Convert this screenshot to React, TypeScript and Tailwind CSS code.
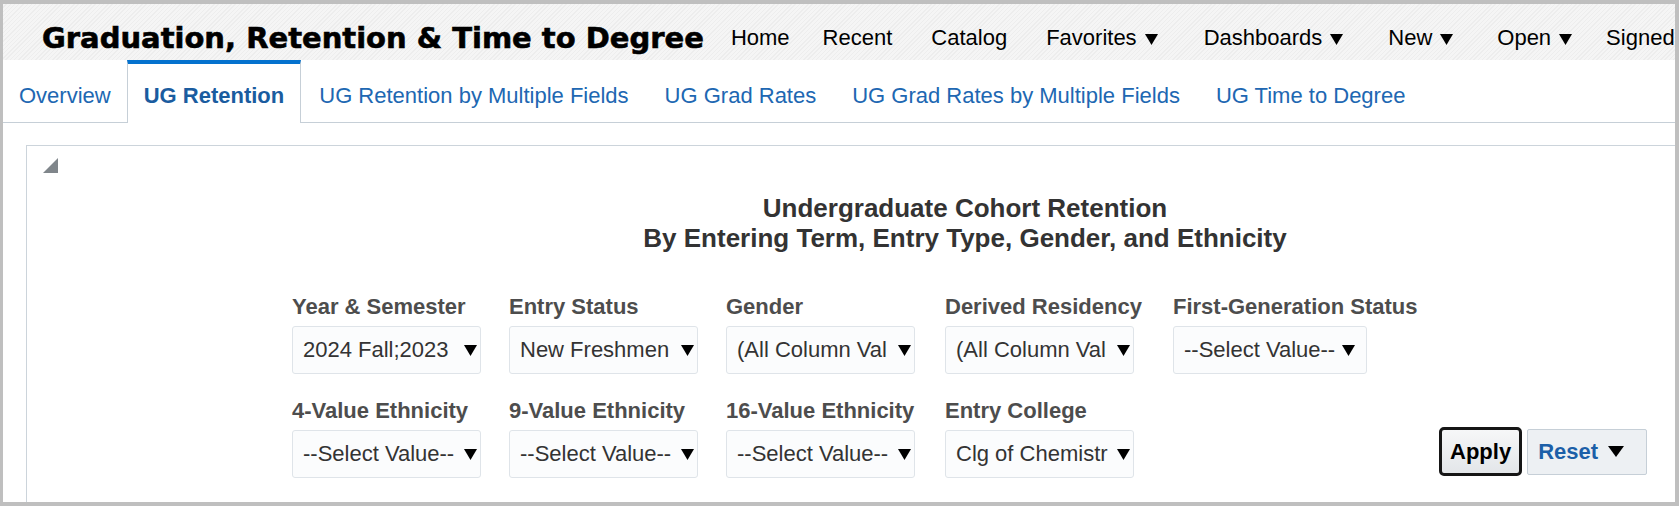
import React from "react";

const navItems = [
  { label: "Home", menu: false, gap: "" },
  { label: "Recent", menu: false, gap: "ml-[33px]" },
  { label: "Catalog", menu: false, gap: "ml-[39px]" },
  { label: "Favorites", menu: true, gap: "ml-[39px]" },
  { label: "Dashboards", menu: true, gap: "ml-[46px]" },
  { label: "New", menu: true, gap: "ml-[45px]" },
  { label: "Open", menu: true, gap: "ml-[44px]" },
  { label: "Signed In As bihenry", menu: true, gap: "ml-[34px]" },
];

const tabs = [
  { label: "Overview", active: false, pad: "px-[16px]" },
  { label: "UG Retention", active: true, pad: "px-[16px]" },
  { label: "UG Retention by Multiple Fields", active: false, pad: "px-[18px]" },
  { label: "UG Grad Rates", active: false, pad: "px-[18px]" },
  { label: "UG Grad Rates by Multiple Fields", active: false, pad: "px-[18px]" },
  { label: "UG Time to Degree", active: false, pad: "px-[18px]" },
];

const rowOne = [
  { label: "Year & Semester", value: "2024 Fall;2023" },
  { label: "Entry Status", value: "New Freshmen" },
  { label: "Gender", value: "(All Column Val" },
  { label: "Derived Residency", value: "(All Column Val" },
  { label: "First-Generation Status", value: "--Select Value--", auto: true },
];

const rowTwo = [
  { label: "4-Value Ethnicity", value: "--Select Value--" },
  { label: "9-Value Ethnicity", value: "--Select Value--" },
  { label: "16-Value Ethnicity", value: "--Select Value--" },
  { label: "Entry College", value: "Clg of Chemistr" },
];

function Caret({ className = "" }: { className?: string }) {
  return (
    <svg viewBox="0 0 13 11" className={`w-[13px] h-[11px] shrink-0 ${className}`}>
      <polygon points="0,0 13,0 6.5,11" fill="#000" />
    </svg>
  );
}

function Prompt({ label, value, auto }: { label: string; value: string; auto?: boolean }) {
  return (
    <div className="flex flex-col items-start">
      <div className="text-[22px] leading-[26px] font-bold text-[#4d4d4d] whitespace-nowrap">{label}</div>
      <div
        className={`mt-[6px] h-[48px] flex items-center bg-[#fbfcfd] border border-[#dfe4e9] rounded-[3px] pl-[10px] ${
          auto ? "pr-[11px]" : "w-[189px] pr-[3px]"
        }`}
      >
        <span className="flex-1 overflow-hidden whitespace-nowrap text-[22px] leading-[26px] text-[#333]">{value}</span>
        <Caret className="ml-[7px]" />
      </div>
    </div>
  );
}

export default function App() {
  return (
    <div className="w-[1679px] h-[506px] overflow-hidden bg-white border-t-4 border-b-4 border-r-4 border-l-[3px] border-[#bfbfbf] font-['Liberation_Sans',Arial,sans-serif]">
      {/* header */}
      <header className="h-[56px] flex whitespace-nowrap overflow-hidden bg-[#f3f3f3] bg-[image:repeating-linear-gradient(135deg,#f5f5f5_0px,#f5f5f5_2px,#ededed_2px,#ededed_3px)]">
        <h1 className="ml-[39px] pt-[17px] text-[29px] leading-[34px] font-bold text-black font-['DejaVu_Sans',sans-serif] [-webkit-text-stroke:0.6px_#000]">
          Graduation, Retention &amp; Time to Degree
        </h1>
        <nav className="ml-[27px] pt-[12px] flex text-[22px] leading-[26px] text-black">
          {navItems.map((n) => (
            <div key={n.label} className={`flex items-center ${n.gap}`}>
              <span>{n.label}</span>
              {n.menu && <Caret className="ml-[8px] mt-[2px]" />}
            </div>
          ))}
        </nav>
      </header>

      {/* tabs */}
      <div className="flex h-[63px] whitespace-nowrap">
        {tabs.map((t) =>
          t.active ? (
            <div
              key={t.label}
              className={`h-full ${t.pad} pt-[19px] border-t-4 border-t-[#0572ce] border-x border-x-[#c6cfd7] text-[22px] leading-[26px] font-bold text-[#1a5c9f]`}
            >
              {t.label}
            </div>
          ) : (
            <div
              key={t.label}
              className={`h-full ${t.pad} pt-[23px] border-b border-[#c6cfd7] text-[22px] leading-[26px] text-[#2067b2]`}
            >
              {t.label}
            </div>
          )
        )}
        <div className="flex-1 h-full border-b border-[#c6cfd7]" />
      </div>

      {/* dashboard panel */}
      <section className="ml-[23px] mt-[22px] w-[1877px] h-[420px] border-t border-l border-[#ccd4db]">
        <svg viewBox="0 0 15 15" className="ml-[16px] mt-[12px] w-[15px] h-[15px] block">
          <polygon points="15,0 15,15 0,15" fill="#80868b" />
        </svg>

        <div className="mt-[20px] text-center text-[26px] leading-[30px] font-bold text-[#333]">
          <div>Undergraduate Cohort Retention</div>
          <div>By Entering Term, Entry Type, Gender, and Ethnicity</div>
        </div>

        <div className="ml-[265px] mt-[41px] grid grid-cols-[189px_189px_191px_200px_196px_auto] gap-x-[28px] gap-y-[24px] justify-start">
          {rowOne.map((p) => (
            <Prompt key={p.label} {...p} />
          ))}
          <div />
          {rowTwo.map((p) => (
            <Prompt key={p.label} {...p} />
          ))}
          <div />
          <div className="self-end mb-[2px] ml-[42px] flex items-center gap-[5px] whitespace-nowrap">
            <button className="h-[49px] px-[8px] border-[3px] border-[#161616] rounded-[5px] bg-[linear-gradient(#f6f7f8,#e3e6e9)] text-[22px] leading-[26px] font-bold text-black">
              Apply
            </button>
            <button className="h-[46px] pl-[10px] pr-[22px] flex items-center border border-[#c6cfd7] rounded-[2px] bg-[#edf0f3] text-[22px] leading-[26px] font-bold text-[#1c5fa8]">
              Reset
              <svg viewBox="0 0 16 11" className="ml-[10px] w-[16px] h-[11px]">
                <polygon points="0,0 16,0 8,11" fill="#000" />
              </svg>
            </button>
          </div>
        </div>
      </section>
    </div>
  );
}
